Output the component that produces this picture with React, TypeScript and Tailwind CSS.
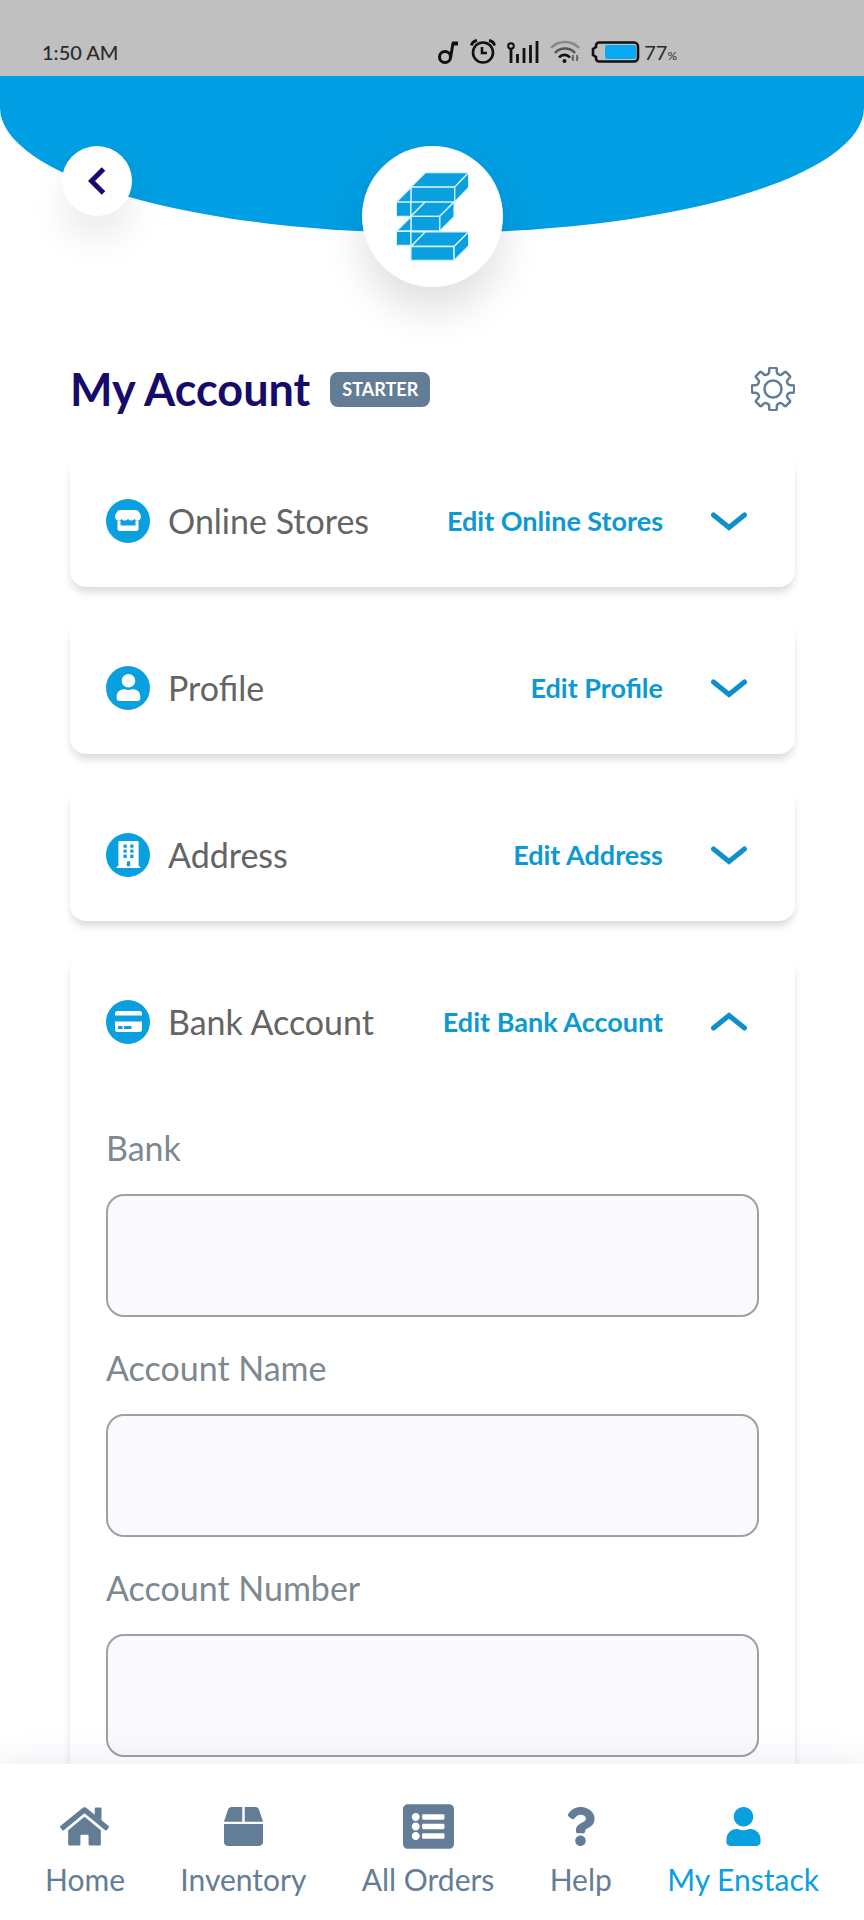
import React, { useState } from "react";
import {
  FaBox,
  FaBuilding,
  FaCreditCard,
  FaHome,
  FaListAlt,
  FaQuestion,
  FaUser,
} from "react-icons/fa";

function StatusBar() {
  return (
    <div className="flex items-center h-[76px] pt-[27px] pl-[42px] pr-[187px] bg-[#c0c0c0] text-[#2b2b2b] shrink-0">
      <span className="flex-1 text-[20px] leading-6 font-medium">1:50 AM</span>
      <div className="flex items-center gap-[11px]">
        <svg width="21" height="24" viewBox="0 0 21 24" fill="none" stroke="#111" strokeWidth="3">
          <circle cx="7" cy="17" r="5.500" />
          <path d="M12.500 18L15 3" />
          <path d="M14 3.500h6" strokeWidth="4" />
        </svg>
        <svg width="26" height="25" viewBox="0 0 26 25" fill="none" stroke="#111" strokeWidth="2.600">
          <circle cx="13" cy="13.500" r="10" />
          <path d="M12 8v6h5" />
          <path d="M1.500 6.500C2 4 4 2 7 1.500M24.500 6.500C24 4 22 2 19 1.500" strokeWidth="3" />
        </svg>
        <svg width="32" height="24" viewBox="0 0 32 24" fill="none" stroke="#111" strokeWidth="2.800">
          <circle cx="4" cy="6" r="2.800" strokeWidth="2" />
          <path d="M4 9v14M10.500 14v9M17 8v15M23.500 5v18M30 1v22" />
        </svg>
        <svg width="30" height="24" viewBox="0 0 30 24" fill="none" stroke="#888" strokeWidth="2.600">
          <path d="M1 8C8 0 22 0 29 8" />
          <path d="M5 13C10 7 20 7 25 13" stroke="#555" />
          <path d="M9 17.500C12 14 17 14 20 17.500" stroke="#111" />
          <circle cx="14.500" cy="21" r="2" fill="#111" stroke="none" />
          <path d="M23 15v6M27 15v6M21.500 18h1M27.500 18h1" stroke="#555" strokeWidth="1.500" />
        </svg>
        <div className="flex items-center gap-1">
          <svg width="49" height="24" viewBox="0 0 49 24">
            <path
              d="M8 2.500h35a4 4 0 0 1 4 4v11a4 4 0 0 1-4 4H8a3 3 0 0 1-3-3V17l-3-2V9l3-2V5.500a3 3 0 0 1 3-3z"
              fill="none"
              stroke="#111"
              strokeWidth="2.600"
            />
            <rect x="14" y="5" width="31" height="14" rx="2" fill="#0aa9f5" />
          </svg>
          <span className="flex items-baseline text-[20px] leading-6">
            77<span className="text-xs">%</span>
          </span>
        </div>
      </div>
    </div>
  );
}

function Logo() {
  return (
    <svg width="73" height="89" viewBox="168 126 220 267" fill="#0a9fdf" stroke="#d5f3ff" strokeWidth="4" strokeLinejoin="round">
      <path d="M257 127H387L345 171H213z" />
      <path d="M213 171H345V216H213z" />
      <path d="M387 127V172L345 216V171z" />
      <path d="M213 172V216H169z" />
      <path d="M169 216H213V259H169z" />
      <path d="M213 216H256L213 259z" />
      <path d="M256 216H343L300 259H213z" />
      <path d="M213 259H300V303H213z" />
      <path d="M343 216V260L300 303V259z" />
      <path d="M213 260V304H169z" />
      <path d="M169 304H213V347H169z" />
      <path d="M213 306H256L213 350z" />
      <path d="M256 306H387L343 350H213z" />
      <path d="M213 350H343V392H213z" />
      <path d="M387 306V348L343 392V350z" />
    </svg>
  );
}

function Header() {
  return (
    <header className="relative grid grid-cols-[1fr_auto_1fr] items-start pt-[70px] px-[62px]">
      <div className="absolute inset-x-0 top-0 h-[157px] bg-[#009ee2] rounded-b-[50%_80%]" />
      <button
        aria-label="Back"
        className="relative flex items-center justify-center w-[70px] h-[70px] rounded-full bg-white shadow-[0_24px_36px_rgba(0,0,0,0.08)]"
      >
        <svg width="18" height="28" viewBox="0 0 18 28" fill="none" stroke="#160b6b" strokeWidth="5">
          <path d="M15.500 2L3.500 14L15.500 26" />
        </svg>
      </button>
      <div className="relative flex items-center justify-center w-[141px] h-[141px] rounded-full bg-white shadow-[0_24px_40px_rgba(0,0,0,0.12)]">
        <Logo />
      </div>
    </header>
  );
}

// Cog outline: eight teeth, corners rounded through the edge midpoints.
function cogPath() {
  const pts: number[][] = [];
  for (let i = 0; i < 8; i++) {
    const ring = [
      [-18, 15.6],
      [-12.5, 17],
      [-10.5, 21.6],
      [-3, 21.2],
      [3, 21.2],
      [10.5, 21.6],
      [12.5, 17],
      [18, 15.6],
    ];
    ring.forEach(([deg, r]) => {
      const a = ((i * 45 + deg) * Math.PI) / 180;
      pts.push([22 + r * Math.sin(a), 22 - r * Math.cos(a)]);
    });
  }
  const mid = (a: number[], b: number[]) => `${(a[0] + b[0]) / 2} ${(a[1] + b[1]) / 2}`;
  const start = mid(pts[pts.length - 1], pts[0]);
  const curves = pts.map((p, i) => `Q${p[0]} ${p[1]} ${mid(p, pts[(i + 1) % pts.length])}`);
  return `M${start}${curves.join("")}Z`;
}

function StoreIcon() {
  return (
    <svg width="26" height="22" viewBox="0 0 26 22" fill="white">
      <path d="M5 0h16c2 0 4 3 5 6c0 3-1.500 4.500-3.500 4.500c-1 0-2-.5-3-1.500c-1 1-2 1.500-3.200 1.500S14 10 13 9c-1 1-2 1.500-3.300 1.500S7.500 10 6.500 9c-1 1-2 1.500-3 1.500C1.500 10.500 0 9 0 6C1 3 3 0 5 0z" />
      <path d="M2.500 10.500h3v5h15v-5h3V19a2 2 0 0 1-2 2h-17a2 2 0 0 1-2-2z" />
    </svg>
  );
}

type SectionProps = {
  title: string;
  icon: React.ReactNode;
  defaultOpen?: boolean;
  children?: React.ReactNode;
};

function Section({ title, icon, defaultOpen = false, children }: SectionProps) {
  const [open, setOpen] = useState(defaultOpen);

  return (
    <section className="bg-white rounded-[16px] shadow-[0_7px_10px_-2px_rgba(0,0,0,0.13),0_4px_8px_rgba(0,0,0,0.03)]">
      <div className="flex items-center h-[133px] px-9">
        <span className="flex items-center justify-center w-11 h-11 rounded-full bg-[#0a9fdf] text-white shrink-0">
          {icon}
        </span>
        <h2 className="flex-1 ml-[18px] text-[34px] leading-10 text-[#646464]">{title}</h2>
        <a href="#" className="text-[27px] leading-8 font-bold text-[#0d99d1]">
          Edit {title}
        </a>
        <button
          aria-label={`Toggle ${title}`}
          aria-expanded={open}
          onClick={() => setOpen(!open)}
          className="ml-12 mr-3"
        >
          <svg
            width="36"
            height="20"
            viewBox="0 0 36 20"
            fill="none"
            stroke="#0d8fcb"
            strokeWidth="5"
            strokeLinecap="round"
            className={open ? "rotate-180" : ""}
          >
            <path d="M2.500 4L18 16.500L33.500 4" />
          </svg>
        </button>
      </div>
      {open && children}
    </section>
  );
}

function Field({ id, label }: { id: string; label: string }) {
  return (
    <div className="flex flex-col gap-6">
      <label htmlFor={id} className="text-[34px] leading-[44px] text-[#7d8890]">
        {label}
      </label>
      <input
        id={id}
        type="text"
        className="w-full h-[123px] px-6 text-[34px] rounded-[18px] border-2 border-[#a0a0a0] bg-[#f9f9fe]"
      />
    </div>
  );
}

const navItems = [
  { label: "Home", icon: <FaHome size={49} /> },
  { label: "Inventory", icon: <FaBox size={39} /> },
  { label: "All Orders", icon: <FaListAlt size={51} /> },
  { label: "Help", icon: <FaQuestion size={39} /> },
  { label: "My Enstack", icon: <FaUser size={39} />, active: true },
];

function BottomNav() {
  return (
    <nav className="relative flex justify-between h-[156px] pt-9 px-[45px] bg-white shrink-0 shadow-[0_-6px_30px_rgba(50,40,130,0.08)]">
      {navItems.map((item) => (
        <a
          key={item.label}
          href="#"
          className={`flex flex-col items-center gap-[7px] ${item.active ? "text-[#0a9fdf]" : "text-[#647d96]"}`}
        >
          <span className="flex items-center h-[52px]">{item.icon}</span>
          <span className="text-[30px] leading-10">{item.label}</span>
        </a>
      ))}
    </nav>
  );
}

export default function App() {
  return (
    <div className="flex flex-col h-screen bg-white font-['Lato',sans-serif]">
      <StatusBar />
      <main className="flex-1 min-h-0 overflow-y-auto [scrollbar-width:none]">
        <Header />
        <div className="pl-[70px] pr-[69px] pt-20 pb-10">
          <div className="flex items-center">
            <h1 className="text-[45px] leading-[44px] font-bold text-[#160b6b]">My Account</h1>
            <span className="ml-5 px-3 rounded-lg bg-[#647d96] text-white text-[18px] leading-[35px] font-bold">
              STARTER
            </span>
            <button aria-label="Settings" className="ml-auto">
              <svg width="44" height="44" viewBox="0 0 44 44" fill="none" stroke="#647d96" strokeWidth="2.500">
                <path d={cogPath()} />
                <circle cx="22" cy="22" r="8.500" />
              </svg>
            </button>
          </div>
          <div className="flex flex-col gap-[34px] mt-[43px]">
            <Section title="Online Stores" icon={<StoreIcon />} />
            <Section title="Profile" icon={<FaUser size={27} />} />
            <Section title="Address" icon={<FaBuilding size={27} />} />
            <Section title="Bank Account" icon={<FaCreditCard size={27} />} defaultOpen>
              <form className="flex flex-col gap-[29px] px-9 pt-[38px] pb-9">
                <Field id="bank" label="Bank" />
                <Field id="account-name" label="Account Name" />
                <Field id="account-number" label="Account Number" />
              </form>
            </Section>
          </div>
        </div>
      </main>
      <BottomNav />
    </div>
  );
}
